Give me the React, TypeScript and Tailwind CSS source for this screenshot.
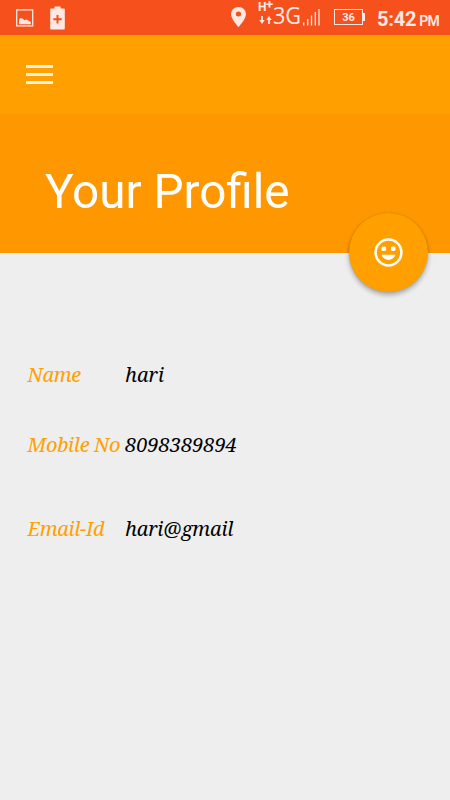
type ProfileField = {
  label: string;
  value: string;
  rowClass: string;
  valueClass: string;
};

const fields: ProfileField[] = [
  { label: 'Name', value: 'hari', rowClass: 'h-[70px]', valueClass: 'tracking-normal' },
  { label: 'Mobile No', value: '8098389894', rowClass: 'h-[84px]', valueClass: 'tracking-normal' },
  { label: 'Email-Id', value: 'hari@gmail', rowClass: 'h-[70px]', valueClass: 'tracking-[-0.2px]' }
];

function StatusBar() {
  return (
    <div className="flex h-[35px] items-start bg-[#f6511d] text-[#ffe9e2]">
      <svg className="ml-4 mt-[9px] h-[18px] w-[18px]" viewBox="0 0 18 18">
        <rect x="0.7" y="0.9" width="16" height="16" fill="none" stroke="currentColor" strokeWidth="1.3" />
        <path d="M3 15.300V10.500l1.500-1.500 2 0.500 2 1.800 2-0.800 4.300 2.500v2.300z" fill="currentColor" />
      </svg>
      <svg className="ml-4 mt-1.5 h-6 w-[15px]" viewBox="0 0 15 24">
        <path
          fillRule="evenodd"
          d="M4.500 0.500h6v2h3.300a1 1 0 0 1 1 1v19a1 1 0 0 1-1 1H1.200a1 1 0 0 1-1-1v-19a1 1 0 0 1 1-1h3.300zM6.500 9v3.200H3.300v2h3.200v3.200h2v-3.200h3.200v-2H8.500V9z"
          fill="currentColor"
        />
      </svg>
      <svg className="ml-[166px] mt-[7px] h-5 w-[15px]" viewBox="0 0 14 20" preserveAspectRatio="none">
        <path
          fillRule="evenodd"
          d="M7 0a7 7 0 0 0-7 7c0 5.200 7 13 7 13s7-7.800 7-13a7 7 0 0 0-7-7zm0 9.500a2.500 2.500 0 1 1 0-5 2.500 2.500 0 0 1 0 5z"
          fill="currentColor"
        />
      </svg>
      <div className="ml-[12px] flex w-[16px] flex-col">
        <span className="flex h-[15px] items-start whitespace-nowrap font-['Roboto',sans-serif] text-[12px] leading-[15px] font-bold">
          <span className="w-[8px]">H</span>
          <span className="text-[13px] leading-[10px]">+</span>
        </span>
        <svg className="ml-px h-[10px] w-[13px]" viewBox="0 0 13 10">
          <path d="M3 1v4.500M10 4.500v4.500" stroke="currentColor" strokeWidth="1.800" />
          <path d="M0.300 5h5.400L3 9zM7.300 5h5.400L10 1z" fill="currentColor" />
        </svg>
      </div>
      <span className="-ml-px inline-block w-[30px] origin-left scale-x-[0.9] whitespace-nowrap font-['Open_Sans',sans-serif] text-[24px] leading-[29px]">
        3G
      </span>
      <svg className="mt-2 h-[18px] w-[17px]" viewBox="0 0 17 18">
        <path d="M0.700 17.500v-3M4.700 17.500V11M8.500 17.500V7.500M12.300 17.500V4M16 17.500V1" stroke="currentColor" strokeWidth="1.300" />
      </svg>
      <div className="ml-[14px] mt-[9px] flex h-[16px] items-center">
        <span className="flex h-[16px] w-[29px] items-center justify-center border border-[#ffe9e2] font-['Roboto',sans-serif] text-[11px] leading-none font-bold">
          36
        </span>
        <span className="h-2 w-[2px] bg-[#ffe9e2]" />
      </div>
      <span className="ml-[12px] mt-2 whitespace-nowrap font-['Roboto',sans-serif] text-[20px] leading-[22px] font-bold tracking-[-0.2px]">
        5:42
      </span>
      <span className="ml-[3px] mt-[12px] whitespace-nowrap font-['Roboto',sans-serif] text-[14px] leading-[18px] font-semibold tracking-[-0.8px]">
        PM
      </span>
    </div>
  );
}

function SmileIcon() {
  return (
    <svg className="h-[29px] w-[29px]" viewBox="0 0 29 29" fill="none">
      <circle cx="14.500" cy="14.500" r="12.900" stroke="white" strokeWidth="2.500" />
      <rect x="7.500" y="8.500" width="4.600" height="4.600" rx="1.500" fill="white" />
      <rect x="16.900" y="8.500" width="4.600" height="4.600" rx="1.500" fill="white" />
      <path d="M7.500 16.800h14c-1.200 3.200-3.800 5.200-7 5.200s-5.800-2-7-5.200z" fill="white" />
    </svg>
  );
}

export default function App() {
  return (
    <div className="h-[800px] w-[450px] overflow-hidden bg-[#eeeeee]">
      <StatusBar />

      <header className="relative h-[218px] bg-[#ff9800]">
        <div className="flex h-[79px] items-center bg-[#ffa000] pl-[26px]">
          <button className="flex w-[27px] flex-col gap-[5px]" aria-label="Menu">
            <span className="h-[3px] w-full bg-[#fff3df]" />
            <span className="h-[3px] w-full bg-[#fff3df]" />
            <span className="h-[3px] w-full bg-[#fff3df]" />
          </button>
        </div>
        <h1 className="ml-[45px] mt-[49px] inline-block origin-left scale-x-[0.972] font-['Roboto',sans-serif] text-[49px] leading-[58px] whitespace-nowrap text-white">
          Your Profile
        </h1>
        {/* floating action button, centred on the header's lower edge */}
        <button
          className="absolute -bottom-[39px] left-[349px] flex h-[79px] w-[79px] items-center justify-center rounded-full bg-[#ffa000] shadow-[0_3px_5px_rgba(0,0,0,0.3),0_0_2px_rgba(0,0,0,0.15)]"
          aria-label="Profile"
        >
          <SmileIcon />
        </button>
      </header>

      <main className="pl-[27.5px] pt-[108px] font-['Noto_Serif','DejaVu_Serif_Condensed','DejaVu_Serif',serif] text-[20px] leading-7 italic">
        {fields.map((field) => (
          <div key={field.label} className={`flex items-start whitespace-nowrap ${field.rowClass}`}>
            <span className="w-[97.5px] tracking-[-0.3px] text-[#ffa000]">{field.label}</span>
            <span className={`text-black ${field.valueClass}`}>{field.value}</span>
          </div>
        ))}
      </main>
    </div>
  );
}
